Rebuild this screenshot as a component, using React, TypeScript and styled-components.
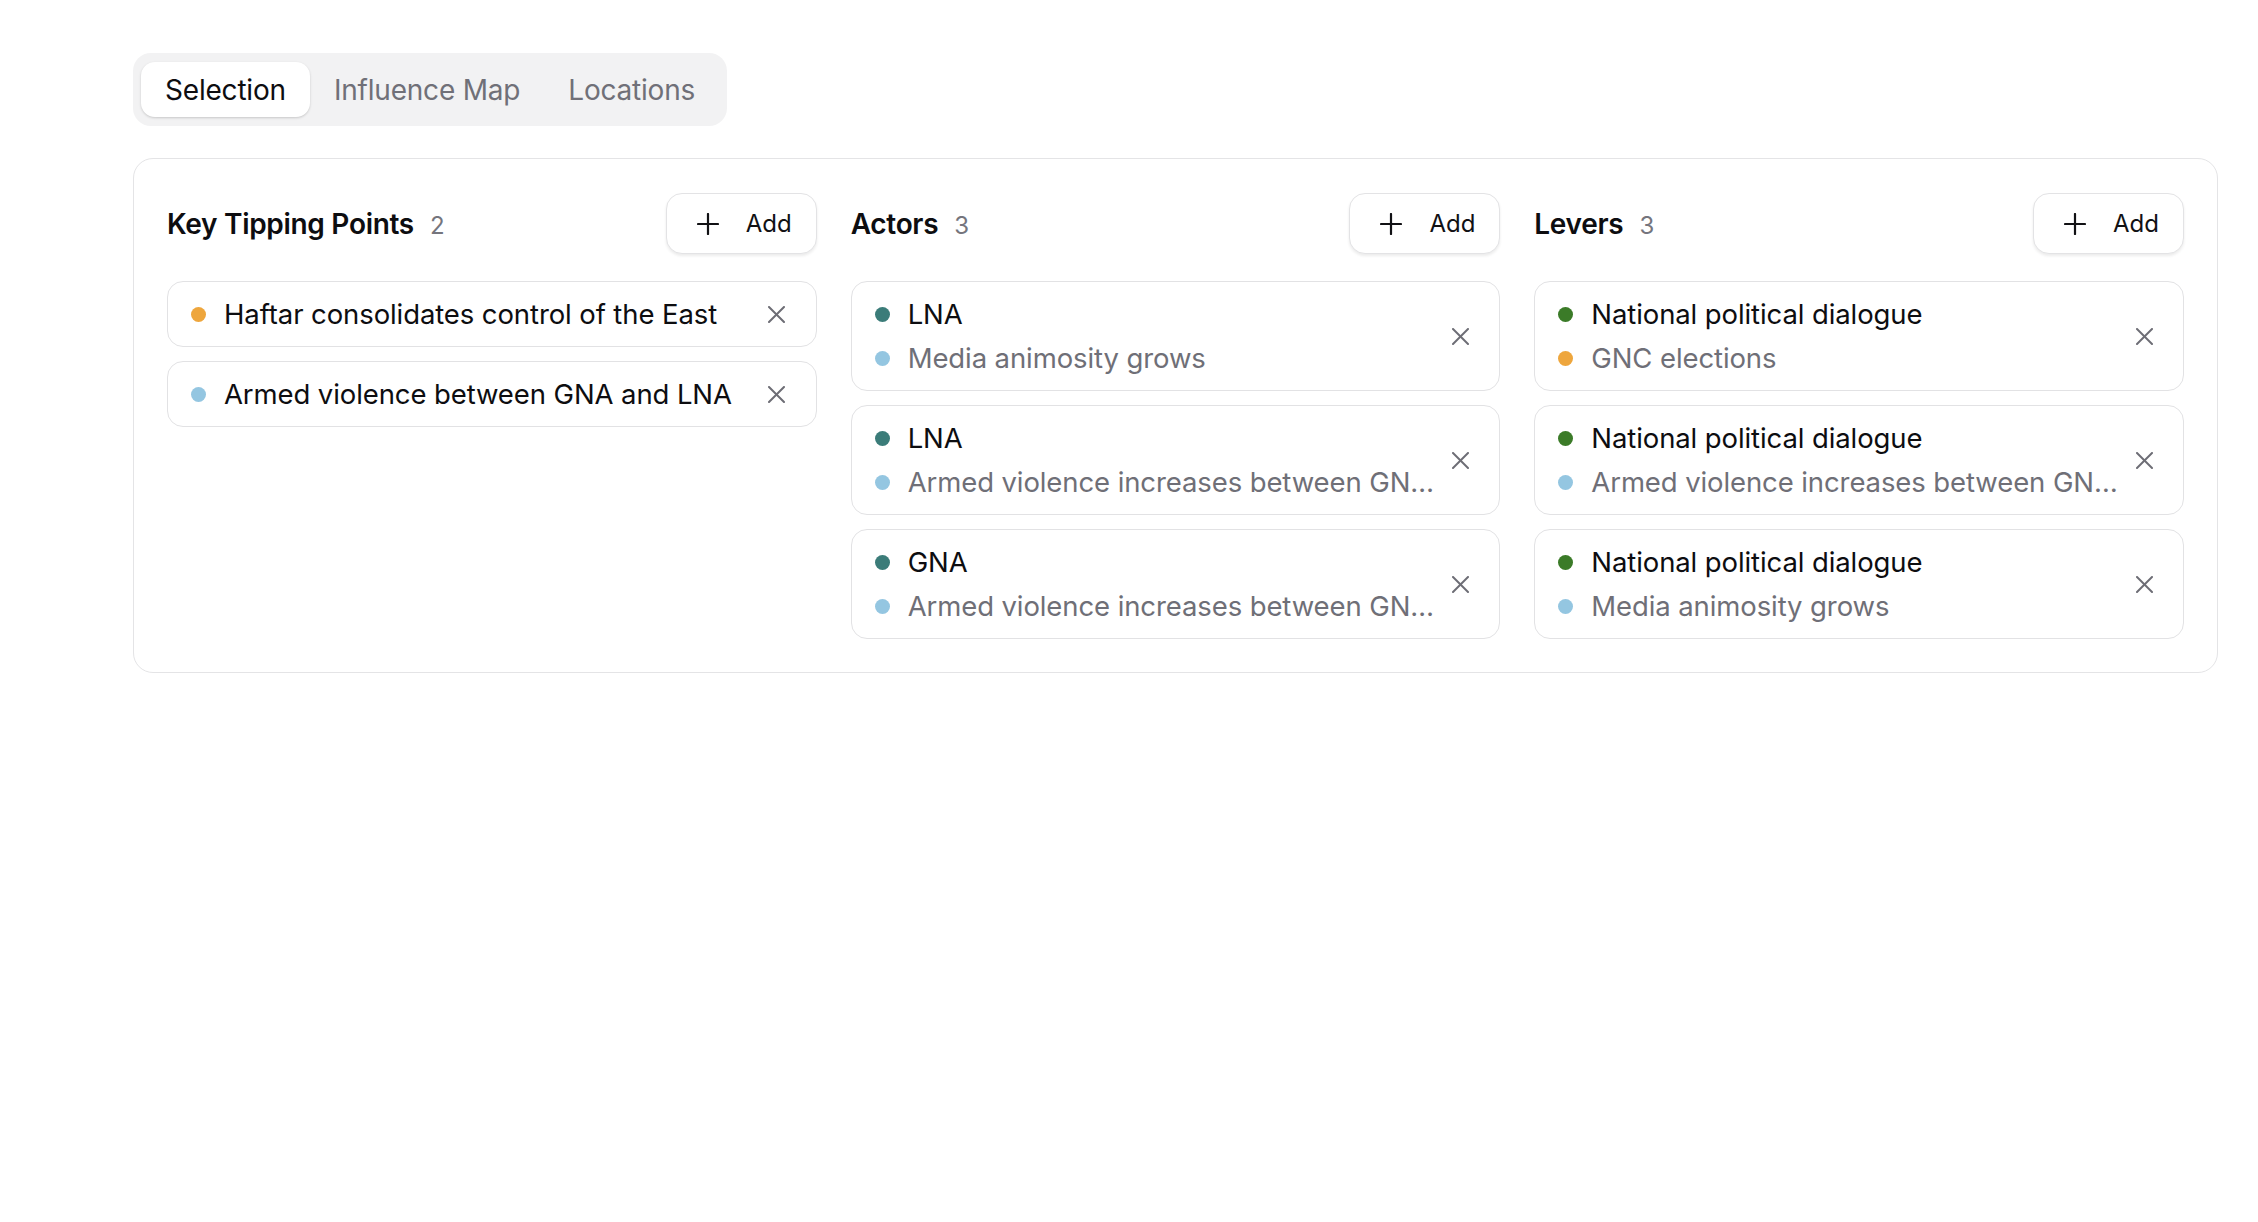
import React, { useState } from 'react';
import styled, { createGlobalStyle } from 'styled-components';

const GlobalStyle = createGlobalStyle`
  html, body {
    margin: 0;
    padding: 0;
    background: #ffffff;
    font-family: Inter, "Noto Sans", "Liberation Sans", sans-serif;
    color: #111114;
  }
  * { box-sizing: border-box; }
`;

const Page = styled.div`
  padding: 53px 40px 0 133px;
`;

const TabList = styled.div`
  display: inline-flex;
  align-items: center;
  padding: 9px 8px;
  background: #f2f2f3;
  border-radius: 18px;
`;

const Tab = styled.button<{ $active?: boolean }>`
  height: 55px;
  padding: 0 24px;
  border: none;
  border-radius: 14px;
  font-family: inherit;
  font-size: 28px;
  letter-spacing: -0.2px;
  cursor: pointer;
  background: ${p => (p.$active ? '#ffffff' : 'transparent')};
  color: ${p => (p.$active ? '#0d0d10' : '#707078')};
  box-shadow: ${p => (p.$active ? '0 1px 3px rgba(0,0,0,0.12), 0 1px 2px rgba(0,0,0,0.06)' : 'none')};
`;

const Panel = styled.div`
  margin-top: 32px;
  border: 1px solid #e4e4e6;
  border-radius: 20px;
  padding: 34px 33px 33px;
  display: grid;
  grid-template-columns: repeat(3, minmax(0, 1fr));
  gap: 34px;
`;

const Column = styled.div`
  display: flex;
  flex-direction: column;
  min-width: 0;
`;

const ColumnHeader = styled.div`
  display: flex;
  align-items: center;
  justify-content: space-between;
  margin-bottom: 27px;
`;

const Title = styled.h2`
  margin: 0;
  font-size: 28px;
  font-weight: 600;
  letter-spacing: -0.3px;
  color: #0d0d10;
  display: flex;
  align-items: baseline;
  gap: 16px;
`;

const Count = styled.span`
  font-size: 24px;
  font-weight: 400;
  color: #75757d;
`;

const AddButton = styled.button`
  display: flex;
  align-items: center;
  gap: 27px;
  height: 61px;
  padding: 0 24px 0 30px;
  background: #ffffff;
  border: 1px solid #e3e3e5;
  border-radius: 16px;
  box-shadow: 0 2px 3px rgba(0,0,0,0.08);
  font-family: inherit;
  font-size: 24px;
  color: #111114;
  cursor: pointer;
`;

const ItemList = styled.div`
  display: flex;
  flex-direction: column;
  gap: 14px;
`;

const Item = styled.div`
  display: flex;
  align-items: center;
  gap: 10px;
  padding: 10px 27px 10px 23px;
  border: 1px solid #e2e2e4;
  border-radius: 16px;
  background: #ffffff;
`;

const ItemBody = styled.div`
  flex: 1;
  min-width: 0;
  display: flex;
  flex-direction: column;
`;

const Line = styled.div<{ $muted?: boolean }>`
  display: flex;
  align-items: center;
  gap: 18px;
  height: 44px;
  font-size: 27.5px;
  letter-spacing: -0.1px;
  color: ${p => (p.$muted ? '#6f6f77' : '#0d0d10')};
`;

const Dot = styled.span<{ $color: string }>`
  flex: none;
  width: 15px;
  height: 15px;
  border-radius: 50%;
  background: ${p => p.$color};
`;

const LineText = styled.span`
  flex: 1;
  min-width: 0;
  white-space: nowrap;
  overflow: hidden;
  text-overflow: ellipsis;
`;

const CloseButton = styled.button`
  flex: none;
  width: 24px;
  height: 34px;
  display: flex;
  align-items: center;
  justify-content: center;
  border: none;
  background: transparent;
  padding: 0;
  cursor: pointer;
  color: #6d6d75;
`;

const colors = {
  orange: '#eea63d',
  blue: '#94c6e1',
  teal: '#3b7c79',
  green: '#3b7b28',
};

type Entry = { id: number; label: string; color: string; sub?: { label: string; color: string } };

const PlusIcon = () => (
  <svg width="22" height="22" viewBox="0 0 22 22" fill="none" stroke="currentColor" strokeWidth="2.2" strokeLinecap="round">
    <line x1="11" y1="1" x2="11" y2="21" />
    <line x1="1" y1="11" x2="21" y2="11" />
  </svg>
);

const XIcon = () => (
  <svg width="17" height="17" viewBox="0 0 17 17" fill="none" stroke="currentColor" strokeWidth="2" strokeLinecap="round">
    <line x1="1" y1="1" x2="16" y2="16" />
    <line x1="16" y1="1" x2="1" y2="16" />
  </svg>
);

function ListColumn({ title, entries, onRemove }: { title: string; entries: Entry[]; onRemove: (id: number) => void }) {
  return (
    <Column>
      <ColumnHeader>
        <Title>
          {title}
          <Count>{entries.length}</Count>
        </Title>
        <AddButton>
          <PlusIcon />
          Add
        </AddButton>
      </ColumnHeader>
      <ItemList>
        {entries.map(entry => (
          <Item key={entry.id}>
            <ItemBody>
              <Line>
                <Dot $color={entry.color} />
                <LineText>{entry.label}</LineText>
              </Line>
              {entry.sub && (
                <Line $muted>
                  <Dot $color={entry.sub.color} />
                  <LineText>{entry.sub.label}</LineText>
                </Line>
              )}
            </ItemBody>
            <CloseButton onClick={() => onRemove(entry.id)} aria-label="Remove">
              <XIcon />
            </CloseButton>
          </Item>
        ))}
      </ItemList>
    </Column>
  );
}

const armed = 'Armed violence increases between GNA and LNA';

function App() {
  const [tab, setTab] = useState('Selection');
  const [tipping, setTipping] = useState<Entry[]>([
    { id: 1, label: 'Haftar consolidates control of the East', color: colors.orange },
    { id: 2, label: 'Armed violence between GNA and LNA', color: colors.blue },
  ]);
  const [actors, setActors] = useState<Entry[]>([
    { id: 1, label: 'LNA', color: colors.teal, sub: { label: 'Media animosity grows', color: colors.blue } },
    { id: 2, label: 'LNA', color: colors.teal, sub: { label: armed, color: colors.blue } },
    { id: 3, label: 'GNA', color: colors.teal, sub: { label: armed, color: colors.blue } },
  ]);
  const [levers, setLevers] = useState<Entry[]>([
    { id: 1, label: 'National political dialogue', color: colors.green, sub: { label: 'GNC elections', color: colors.orange } },
    { id: 2, label: 'National political dialogue', color: colors.green, sub: { label: armed, color: colors.blue } },
    { id: 3, label: 'National political dialogue', color: colors.green, sub: { label: 'Media animosity grows', color: colors.blue } },
  ]);

  return (
    <Page>
      <GlobalStyle />
      <TabList>
        {['Selection', 'Influence Map', 'Locations'].map(name => (
          <Tab key={name} $active={tab === name} onClick={() => setTab(name)}>
            {name}
          </Tab>
        ))}
      </TabList>
      <Panel>
        <ListColumn title="Key Tipping Points" entries={tipping} onRemove={id => setTipping(t => t.filter(e => e.id !== id))} />
        <ListColumn title="Actors" entries={actors} onRemove={id => setActors(t => t.filter(e => e.id !== id))} />
        <ListColumn title="Levers" entries={levers} onRemove={id => setLevers(t => t.filter(e => e.id !== id))} />
      </Panel>
    </Page>
  );
}

export default App;
